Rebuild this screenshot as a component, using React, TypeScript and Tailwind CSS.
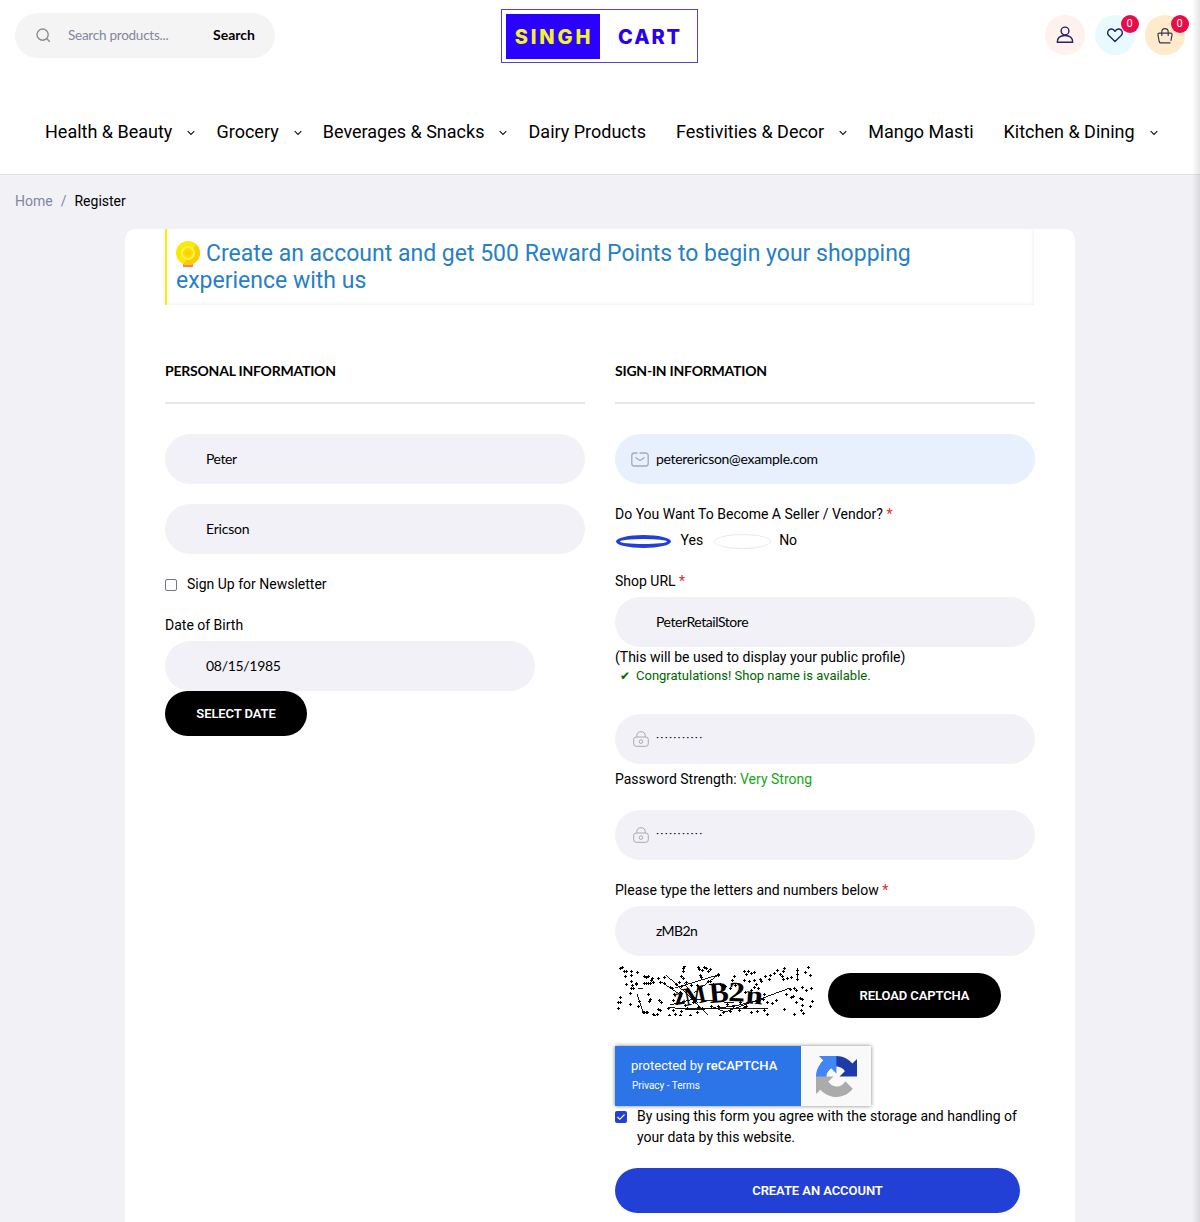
import { ReactNode } from 'react'
import clsx from 'clsx'

interface MenuItem {
  label: string
  hasChildren?: boolean
}

const MENU: MenuItem[] = [
  { label: 'Health & Beauty', hasChildren: true },
  { label: 'Grocery', hasChildren: true },
  { label: 'Beverages & Snacks', hasChildren: true },
  { label: 'Dairy Products' },
  { label: 'Festivities & Decor', hasChildren: true },
  { label: 'Mango Masti' },
  { label: 'Kitchen & Dining', hasChildren: true },
]

// speckles of the captcha, on a 200x50 canvas
const SPECKLES = [
  [7, 1], [5, 2], [9, 5], [11, 5], [16, 5], [16, 9], [22, 6], [16, 15], [10, 10], [21, 17], [11, 18], [17, 19],
  [29, 10], [31, 11], [33, 10], [37, 12], [36, 14], [29, 17], [31, 17], [33, 17], [35, 17], [38, 16], [16, 22], [21, 18],
  [15, 27], [18, 22], [5, 31], [3, 36], [5, 36], [3, 42], [15, 38], [24, 35], [23, 40], [33, 28], [34, 35], [35, 33],
  [29, 46], [28, 46], [31, 46], [32, 46], [42, 48], [38, 48], [43, 43], [45, 44], [44, 34], [46, 36], [39, 49], [49, 11], [43, 12],
  [45, 16], [49, 17], [55, 21], [57, 22], [59, 28], [61, 18], [69, 0], [68, 2], [68, 5], [66, 10], [68, 12], [83, 1], [84, 3],
  [87, 4], [89, 1], [91, 2], [93, 5], [95, 3], [85, 9], [86, 11], [103, 8], [103, 9], [64, 16], [71, 16], [66, 20], [76, 19],
  [95, 15], [98, 18], [93, 15], [105, 18], [110, 20], [117, 14], [119, 10], [120, 19], [129, 5], [133, 5], [131, 8],
  [136, 7], [139, 6], [129, 14], [134, 15], [139, 14], [141, 18], [145, 13], [146, 15], [150, 10], [155, 9], [154, 13],
  [159, 7], [162, 4], [165, 8], [167, 10], [168, 5], [169, 2], [168, 13], [172, 12], [176, 11], [182, 4], [182, 8],
  [182, 13], [193, 1], [190, 6], [195, 9], [187, 21], [191, 24], [179, 22], [181, 24], [175, 23], [171, 28], [178, 30],
  [176, 31], [185, 32], [187, 33], [196, 22], [197, 35], [181, 36], [195, 40], [179, 48], [188, 47], [186, 44], [187, 39],
  [161, 34], [157, 37], [152, 36], [149, 28], [148, 33], [143, 31], [143, 22], [139, 21], [136, 24], [142, 45],
  [149, 44], [152, 48], [136, 46], [131, 40], [129, 41], [124, 44], [118, 40], [115, 45], [108, 46], [105, 49],
  [82, 46], [75, 49], [65, 49], [66, 45], [60, 48], [58, 44], [54, 49], [53, 42], [62, 37],
  [67, 36], [70, 39], [58, 34], [65, 30], [72, 42], [87, 42], [78, 36], [83, 41], [96, 40], [103, 40], [169, 43],
  [112, 38], [125, 36], [75, 27], [65, 26], [82, 19], [130, 26], [115, 22],
]

const Chevron = () => (
  <svg viewBox="0 0 8 6" className="ml-[15px] mt-[3px] h-1.5 w-2" fill="none" stroke="#111" strokeWidth="1.1">
    <path d="M.7 1.2 4 4.5l3.3-3.3" />
  </svg>
)

const Logo = () => (
  <div className="-ml-px flex h-[54px] w-[197px] items-center border border-[#5145cf] pl-1 font-[Inter] text-[20px] font-extrabold">
    <span className="flex h-[45px] w-[94px] items-center justify-center bg-[#2a00ff] pl-0.5 pt-px tracking-[2.9px] text-[#f3f32b]">
      SINGH
    </span>
    <span className="ml-[18px] pt-px tracking-[1.9px] text-[#2a00ee]">CART</span>
  </div>
)

interface RoundButtonProps {
  color: string
  count?: number
  children: ReactNode
}

const RoundButton = ({ color, count, children }: RoundButtonProps) => (
  <button className={clsx('relative flex h-10 w-10 items-center justify-center rounded-full', color)}>
    {children}
    {count !== undefined && (
      <span className="absolute -right-[3.5px] top-0 flex h-[18px] w-[18px] items-center justify-center rounded-full bg-[#e80c48] text-[11px] text-white">
        {count}
      </span>
    )}
  </button>
)

const Header = () => (
  <header className="h-[175px] border-b border-[#e4e4e7] bg-white">
    <div className="flex h-[72px] items-center justify-between px-[15px]">
      <div className="flex w-[486px] pb-[2px]">
        <div className="flex h-[45px] w-[260px] items-center rounded-full bg-[#f4f4f4] pl-[21px] font-[Lato] text-[14px]">
          <svg viewBox="0 0 15 15" className="h-[15px] w-[15px]" fill="none" stroke="#8b8b8b" strokeWidth="1.4">
            <circle cx="6.6" cy="6.6" r="5.6" />
            <path d="m10.8 10.8 3 3" />
          </svg>
          <span className="ml-[17px] w-[145px] pt-px text-[13.5px] tracking-[-0.25px] text-[#8286a3]">Search products...</span>
          <span className="pb-px font-bold text-black">Search</span>
        </div>
      </div>
      <Logo />
      <div className="flex w-[486px] justify-end gap-2.5 pb-0.5">
        <RoundButton color="bg-[#fff1ed]">
          <svg viewBox="0 0 18 18" className="h-[18px] w-[18px]" fill="none" stroke="#252466" strokeWidth="1.4">
            <circle cx="9" cy="5" r="3.9" />
            <path d="M1.3 16.3c0-4.2 2.8-6.8 7.7-6.8s7.7 2.6 7.7 6.8z" strokeLinejoin="round" />
          </svg>
        </RoundButton>
        <RoundButton color="bg-[#e9faff]" count={0}>
          <svg viewBox="0 0 18 18" className="h-[18px] w-[18px]" fill="none" stroke="#252466" strokeWidth="1.4">
            <path d="M9 15.6 2.6 9.3C.8 7.3 1.5 3.6 4.8 3c1.9-.3 3.4.8 4.2 2.3C9.8 3.8 11.3 2.7 13.2 3c3.3.6 4 4.3 2.2 6.3z" strokeLinejoin="round" />
          </svg>
        </RoundButton>
        <RoundButton color="bg-[#fdebcb]" count={0}>
          <svg viewBox="0 0 18 18" className="h-[18px] w-[18px]" fill="none" stroke="#3b3550" strokeWidth="1.2" strokeLinecap="round">
            <path d="M14 16.9H5c-1.1 0-1.6-.5-1.8-1.4L2 9c-.2-1.2.4-1.9 1.3-1.9h11.4c.9 0 1.5.7 1.3 1.9l-1 5.3M5.8 9.5V6C5.8 4 7 2.7 9 2.7s3.2 1.3 3.2 3.3v3.5" />
          </svg>
        </RoundButton>
      </div>
    </div>
    <nav className="flex h-[118px] items-center pl-[45px] text-[18px] text-black">
      {MENU.map((item) => (
        <a key={item.label} className={clsx('flex items-center whitespace-nowrap', item.hasChildren ? 'mr-[21.1px]' : 'mr-[29.9px]')}>
          {item.label}
          {item.hasChildren && <Chevron />}
        </a>
      ))}
    </nav>
  </header>
)

const Notice = () => (
  <div className="ml-10 mr-[41px] flex h-[76px] shadow-[inset_-1px_-1px_3px_rgba(0,0,0,0.06)]">
    <div className="w-[1.5px] shrink-0 bg-[#fbf000]" />
    <h2 className="pl-[9.5px] pt-[11px] text-[23px] leading-[27px] text-[#2780c5]">
      <svg viewBox="0 0 24 26" className="mr-1.5 inline-block h-[26px] w-6 align-[-6px]">
        <path d="M7 21h10v5H7z" fill="#f4845f" />
        <circle cx="12" cy="12" r="12" fill="#fde800" />
        <path d="M20.5 3.5a12 12 0 0 1-13 19.6z" fill="#ffcb05" />
        <circle cx="12" cy="12" r="6" fill="#fddb06" stroke="#fff64a" strokeWidth="2" />
        <circle cx="12" cy="12" r="2.8" fill="#fbd100" />
      </svg>
      Create an account and get 500 Reward Points to begin your shopping
      <br />
      experience with us
    </h2>
  </div>
)

interface FieldProps {
  value: string
  className?: string
  icon?: ReactNode
  text?: string
}

const Field = ({ value, className, icon, text = 'pb-px tracking-[-0.45px]' }: FieldProps) => (
  <div className={clsx('flex h-[50px] items-center rounded-[25px] font-[Lato] text-[14px]', className ?? 'bg-[#f2f1f8]')}>
    <span className="flex w-[41px] shrink-0 justify-end pr-[7px]">{icon}</span>
    <input className={clsx('w-full bg-transparent text-black outline-none', text)} defaultValue={value} />
  </div>
)

const PasswordField = () => (
  <Field
    value="···········"
    icon={<LockIcon />}
    text="pb-0.5 font-[Roboto] text-[11px] font-medium tracking-[1.2px]"
  />
)

const MailIcon = () => (
  <svg viewBox="0 0 18 15" className="h-[15px] w-[18px] shrink-0" fill="none" stroke="#a4aab8" strokeWidth="1.3" strokeLinecap="round">
    <path d="M6 1H3.5C1.8 1 .8 2 .8 3.6v7.8c0 1.6 1 2.6 2.7 2.6h11c1.7 0 2.7-1 2.7-2.6V3.6C17.2 2 16.2 1 14.5 1H9M5 5.8l2.7 2c.8.6 1.8.6 2.6 0l2.7-2" />
  </svg>
)

const LockIcon = () => (
  <svg viewBox="0 0 16 16" className="h-4 w-4 shrink-0" fill="none" stroke="#aaa9b0" strokeWidth="1">
    <rect x=".7" y="6" width="14.6" height="9.3" rx="2.5" />
    <path d="M3.8 6V4.7C3.8 2.2 5.3.7 8 .7s4.2 1.5 4.2 4V6" />
    <circle cx="8" cy="10.6" r="1.8" />
  </svg>
)

const SectionTitle = ({ children }: { children: string }) => (
  <h3 className="mb-[30px] h-[43px] border-b-2 border-[#e6e6eb] font-[Lato] text-[14px] font-bold leading-5 tracking-[-0.22px] text-black">
    {children}
  </h3>
)

const Required = () => <span className="text-[#e02b27]">*</span>

const Checkbox = ({ checked }: { checked?: boolean }) => (
  <span
    className={clsx(
      'flex h-3 w-3 shrink-0 items-center justify-center rounded-[2px]',
      checked ? 'bg-[#2340d6]' : 'border border-[#767680]',
    )}
  >
    {checked && (
      <svg viewBox="0 0 10 8" className="h-2 w-2.5" fill="none" stroke="#fff" strokeWidth="1.1">
        <path d="m1.5 4 2.3 2.3L8.5 1.5" />
      </svg>
    )}
  </span>
)

const Captcha = () => (
  <svg viewBox="0 0 200 50" className="h-[50px] w-[200px]" fill="none" stroke="#000" strokeWidth="0.9" shapeRendering="crispEdges">
    <path d={SPECKLES.map(([x, y]) => `M${x - 1} ${y + 0.5}h3M${x + 0.5} ${y - 1}v3`).join('')} strokeWidth="1" />
    <path d="M22 28l6 18M28 22l-5 0M51 9l22 20 20 20M45 15l22 15M60 22l43-13-24 18M53 41c25 5 60 2 97-8M96 40l14 6 65-24M55 39l24-6 40 4M69 17l14 20M96 42l57 1M62 43l34-1M182 2v12" />
    <g fill="#000" stroke="none" fontFamily="Liberation Serif" fontWeight="bold" shapeRendering="auto">
      <text transform="translate(60 39) rotate(-8)" fontSize="24">z</text>
      <text transform="translate(71 40) rotate(-12) scale(.9 1)" fontSize="26">M</text>
      <text transform="translate(95 37) rotate(-5)" fontSize="29">B</text>
      <text transform="translate(113 35) rotate(2) scale(1.2 1)" fontSize="28">2</text>
      <text transform="translate(130 37) rotate(5) scale(1.2 1)" fontSize="26">n</text>
    </g>
  </svg>
)

const RecaptchaBadge = () => (
  <div className="flex h-[60px] w-64 shadow-[0_0_4px_#808080]">
    <div className="w-[186px] bg-[#2c75e8] pl-4 pt-2.5 text-white">
      <p className="text-[13px] leading-5">
        protected by <b className="font-medium">reCAPTCHA</b>
      </p>
      <p className="pl-px text-[10px] leading-[19px]">Privacy - Terms</p>
    </div>
    <div className="flex flex-1 items-center justify-center bg-[#f9f9f9]">
      <svg viewBox="0 0 64 64" className="h-[41px] w-[41px]">
        <path fill="#1c3aa9" d="M64 31.955l-.033-1.37V4.687l-7.16 7.16C50.948 4.674 42.033.093 32.05.093c-10.4 0-19.622 4.96-25.458 12.64l11.736 11.86a15.55 15.55 0 0 1 4.754-5.334c2.05-1.6 4.952-2.906 8.968-2.906.485 0 .86.057 1.135.163 4.976.393 9.288 3.14 11.828 7.124l-8.307 8.307L64 31.953" />
        <path fill="#4285f4" d="M31.862.094l-1.37.033H4.594l7.16 7.16C4.58 13.147 0 22.06 0 32.046c0 10.4 4.96 19.622 12.64 25.458L24.5 45.768a15.55 15.55 0 0 1-5.334-4.754c-1.6-2.05-2.906-4.952-2.906-8.968 0-.485.057-.86.163-1.135.393-4.976 3.14-9.288 7.124-11.828l8.307 8.307L31.86.095" />
        <path fill="#ababab" d="M.001 32.045l.033 1.37v25.898l7.16-7.16c5.86 7.173 14.774 11.754 24.76 11.754 10.4 0 19.622-4.96 25.458-12.64l-11.736-11.86a15.55 15.55 0 0 1-4.754 5.334c-2.05 1.6-4.952 2.906-8.968 2.906-.485 0-.86-.057-1.135-.163-4.976-.393-9.288-3.14-11.828-7.124l8.307-8.307c-10.522.04-22.4.066-27.295-.005" />
      </svg>
    </div>
  </div>
)

const PersonalInformation = () => (
  <section className="w-[420px]">
    <SectionTitle>PERSONAL INFORMATION</SectionTitle>
    <Field value="Peter" />
    <div className="h-5" />
    <Field value="Ericson" text="pb-px tracking-[-0.2px]" />
    <label className="mt-5 flex h-5 items-center gap-2.5">
      <span className="pt-0.5">
        <Checkbox />
      </span>
      Sign Up for Newsletter
    </label>
    <p className="mt-[21px] h-[26px] leading-5">Date of Birth</p>
    <div className="w-[370px]">
      <Field value="08/15/1985" text="pb-px tracking-[-0.3px]" />
    </div>
    <button className="h-[45px] w-[142px] rounded-full bg-black text-[13px] font-semibold tracking-[-0.1px] text-white">SELECT DATE</button>
  </section>
)

const SignInInformation = () => (
  <section className="w-[420px]">
    <SectionTitle>SIGN-IN INFORMATION</SectionTitle>
    <Field
      value="peterericson@example.com"
      className="bg-[#e8f0fe]"
      icon={<MailIcon />}
      text="pb-px tracking-[-0.3px]"
    />
    <p className="mt-5 leading-5">
      Do You Want To Become A Seller / Vendor? <Required />
    </p>
    <div className="mt-1.5 flex h-5 items-center">
      <span className="ml-px mt-[3px] h-[13px] w-[55px] rounded-[50%] border-4 border-[#2340d6]" />
      <span className="ml-[9.5px]">Yes</span>
      <span className="ml-[11px] mt-[3px] h-[15px] w-[57px] rounded-[50%] border border-[#e9e9ec]" />
      <span className="ml-2">No</span>
    </div>
    <p className="mt-[21px] h-[26px] leading-5">
      Shop URL <Required />
    </p>
    <Field value="PeterRetailStore" />
    <p className="leading-5">(This will be used to display your public profile)</p>
    <p className="flex h-[47px] pl-[5px] text-[13px] leading-[18px] text-[#006400]">
      <span className="w-4 font-['DejaVu_Sans'] text-[12px]">✔</span>
      Congratulations! Shop name is available.
    </p>
    <PasswordField />
    <p className="mt-[5px] h-[41px] leading-5">
      Password Strength: <span className="text-[#14a814]">Very Strong</span>
    </p>
    <PasswordField />
    <p className="mt-5 h-[26px] leading-5">
      Please type the letters and numbers below <Required />
    </p>
    <Field value="zMB2n" text="pb-px tracking-[-0.6px]" />
    <div className="mt-2.5 flex h-[80px] items-start">
      <Captcha />
      <button className="ml-[13px] mt-[7px] h-[45px] w-[173px] rounded-full bg-black text-[13px] font-semibold tracking-[-0.1px] text-white">
        RELOAD CAPTCHA
      </button>
    </div>
    <RecaptchaBadge />
    <label className="flex items-start gap-2.5 leading-[21px]">
      <span className="pt-[5px]">
        <Checkbox checked />
      </span>
      <span>
        By using this form you agree with the storage and handling of
        <br />
        your data by this website.
      </span>
    </label>
    <button className="mt-5 h-[45px] w-[405px] rounded-full bg-[#2340d6] text-[13px] font-semibold tracking-[-0.07px] text-white">
      CREATE AN ACCOUNT
    </button>
  </section>
)

const App = () => {
  return (
    <div className="relative h-[1222px] w-[1200px] overflow-hidden bg-[#f1f1f6] font-[Roboto,sans-serif] text-[14px] text-black">
      <Header />
      <div className="flex h-[54px] gap-2 pl-[15px] pt-4 leading-5 text-[#8286a3]">
        <span>Home</span>
        <span>/</span>
        <span className="text-black">Register</span>
      </div>
      <main className="mx-auto h-[1000px] w-[950px] rounded-t-[10px] bg-white">
        <Notice />
        <div className="mt-14 flex gap-[30px] pl-10">
          <PersonalInformation />
          <SignInInformation />
        </div>
      </main>
      <div className="absolute right-0 top-0 h-full w-2 bg-linear-to-l from-black/10 to-transparent" />
    </div>
  )
}

export default App
